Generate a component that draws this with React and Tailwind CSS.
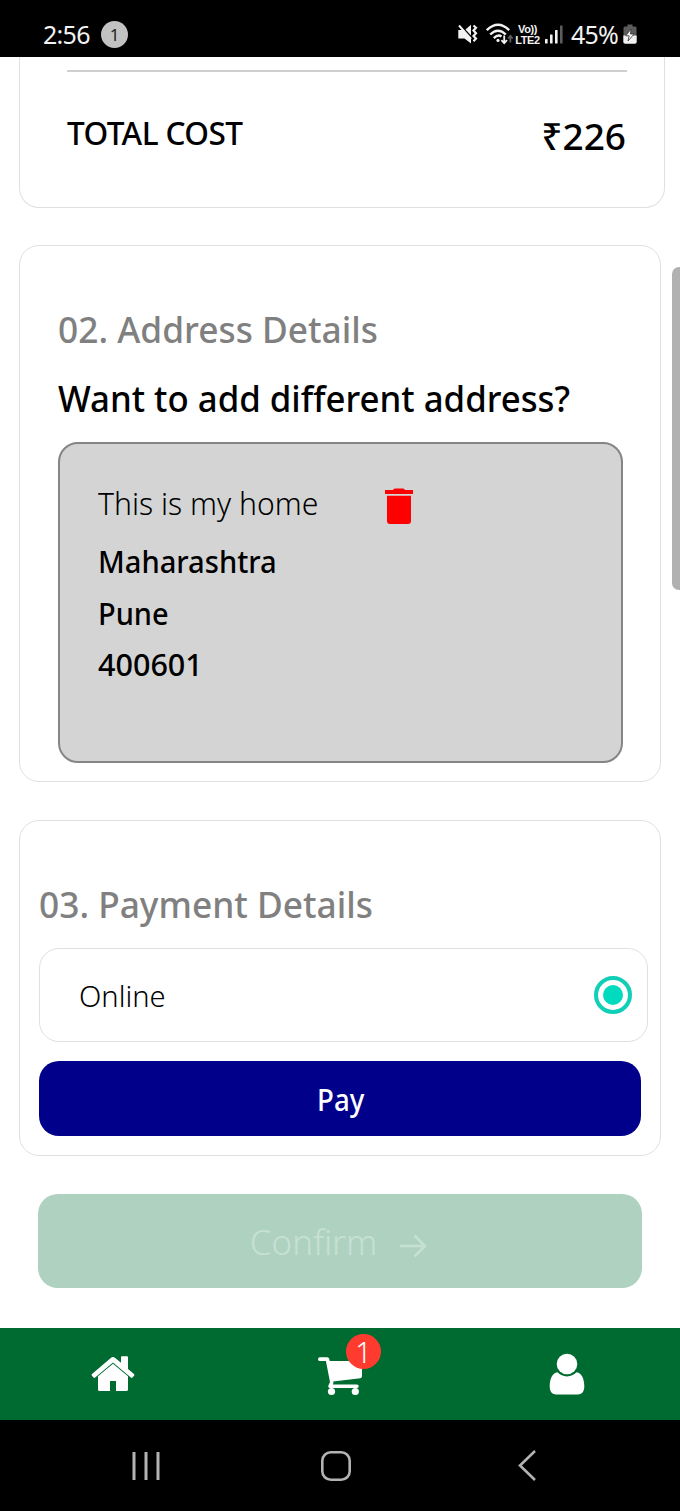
const cardClass = "rounded-[20px] border border-[#e0e0e0] bg-white";

const MuteIcon = () => (
  <svg width="20" height="20" viewBox="0 0 20 20" fill="#f2f2f2">
    <path d="M0.3 6h5L13 14.5V19.5L6.5 14.5H0.3z" />
    <path d="M7.5 5.5L13 0.8v10.7z" />
    <path d="M1 1.5l12 13.5" stroke="#f2f2f2" strokeWidth="2" />
    <path d="M15.5 1.5l2.5 2.3-2.5 2.7 2.5 2.7-2.5 2.7 2.5 2.7-2.5 2.7" fill="none" stroke="#f2f2f2" strokeWidth="2.2" />
  </svg>
);

const WifiIcon = () => (
  <svg width="27" height="22" viewBox="0 0 27 22" fill="none" stroke="#f2f2f2" strokeWidth="2.4">
    <path d="M0.8 7.2Q12 -3.8 23.2 7.2" />
    <path d="M4.2 11.5Q12 3.8 19.8 11.5" />
    <path d="M7.8 15.2Q12 11 15.5 13.5" />
    <circle cx="12" cy="17.4" r="1.6" fill="#f2f2f2" stroke="none" />
    <path d="M18.2 12.5v7.5M15.4 17.2l2.8 3 2.8-3" strokeWidth="1.8" />
    <path d="M24.4 19.5v-6M22 15.5l2.4-2.6 2.4 2.6" stroke="#5c5c5c" strokeWidth="1.8" />
  </svg>
);

const SignalIcon = () => (
  <svg width="18" height="19" viewBox="0 0 18 19" fill="#f2f2f2">
    <rect x="0" y="14" width="2.6" height="4.5" rx="0.5" />
    <rect x="5" y="9.5" width="2.6" height="9" rx="0.5" />
    <rect x="10" y="5" width="2.6" height="13.5" rx="0.5" />
    <rect x="15" y="0.5" width="2.6" height="18" rx="0.5" fill="#5c5c5c" />
  </svg>
);

const BatteryIcon = () => (
  <svg width="14" height="20" viewBox="0 0 14 20">
    <path d="M4.5 0.5h5v2h2.5a1.5 1.5 0 0 1 1.5 1.5v8.5H0.5V4a1.5 1.5 0 0 1 1.5-1.5h2.5z" fill="#5c5c5c" />
    <path d="M0.3 11.5h13.4v6.5a1.8 1.8 0 0 1-1.8 1.8H2.1a1.8 1.8 0 0 1-1.8-1.8z" fill="#f2f2f2" />
    <path d="M8 5L2.8 11.8h3.4L5 17l6-7H7.4z" fill="#fff" stroke="#333" strokeWidth="0.8" />
  </svg>
);

const TrashIcon = () => (
  <svg width="28" height="36" viewBox="0 0 28 36" fill="#ff0000">
    <path d="M0 2h7.8L9.6 0.5h8.8l1.8 1.5H28v4H0z" />
    <path d="M2 7.8h24V33a3 3 0 0 1-3 3H5a3 3 0 0 1-3-3z" />
  </svg>
);

const HomeIcon = () => (
  <svg width="44" height="36" viewBox="0 0 44 36" fill="#fff">
    <path d="M22 7.8L37 20.2V33.5a1.6 1.6 0 0 1-1.6 1.5H25V25h-6v10H8.6A1.6 1.6 0 0 1 7 33.5V20.2z" />
    <path d="M30 3V1.3A1 1 0 0 1 31 .3h5a1 1 0 0 1 1 1V13l6 5a1.2 1.2 0 0 1 .1 1.7l-1.6 1.8a1.2 1.2 0 0 1-1.7.1L22 6.4 4.2 21.6a1.2 1.2 0 0 1-1.7-.1L.9 19.7A1.2 1.2 0 0 1 1 18L19.8 1.9a3.4 3.4 0 0 1 4.4 0L30 6.8z" />
  </svg>
);

const CartIcon = () => (
  <svg width="44" height="39" viewBox="0 0 44 39" fill="#fff">
    <path d="M1.9.3H9.2Q10.8.3 11.2 1.8L11.7 4H42.2a1.8 1.8 0 0 1 1.8 1.8V19.3a1.9 1.9 0 0 1-1.7 1.9L15.2 24.4Q15.7 26 14.8 27.5H39a1.7 1.7 0 0 1 0 3.5H12a1.8 1.8 0 0 1-1.6-2.5L12 25 7.9 4H1.9a1.85 1.85 0 0 1 0-3.7z" />
    <circle cx="13.5" cy="34.5" r="3.6" />
    <circle cx="37.3" cy="34.5" r="3.6" />
  </svg>
);

const UserIcon = () => (
  <svg width="36" height="42" viewBox="0 0 36 42" fill="#fff">
    <circle cx="18" cy="11" r="10.3" />
    <path d="M8.5 19.3a13 13 0 0 0 19 0C33 20 35.3 26.5 35.3 33.5c0 5-2.5 8-6.5 8H7.2c-4 0-6.5-3-6.5-8C.7 26.5 3 20 8.5 19.3z" />
  </svg>
);

const StatusBar = () => (
  <header className="flex h-[57px] items-start justify-between bg-black px-[43px] pt-3 text-[#f2f2f2]">
    <div className="flex h-[44px] items-center gap-[10px]">
      <span className="w-[48px] text-[25px] leading-[44px] tracking-[-0.7px] whitespace-nowrap">2:56</span>
      <span className="flex size-[27px] items-center justify-center rounded-full bg-[#c2c2c2] text-[17px] leading-none text-[#222]">
        1
      </span>
    </div>
    <div className="flex h-[44px] items-center">
      <MuteIcon />
      <span className="ml-2">
        <WifiIcon />
      </span>
      <span className="ml-[1px] flex w-[27px] flex-col items-center font-['Liberation_Sans',sans-serif] text-[11px] leading-[11px] font-bold tracking-[-0.4px]">
        <span className="h-[11px]">Vo))</span>
        <span className="h-[10px]">LTE2</span>
      </span>
      <span className="ml-[4px]">
        <SignalIcon />
      </span>
      <span className="ml-[8px] w-[49px] text-[25px] leading-[44px] tracking-[-0.8px] whitespace-nowrap">45%</span>
      <span className="ml-[3px]">
        <BatteryIcon />
      </span>
    </div>
  </header>
);

const TotalCard = () => (
  <section className="ml-[19px] h-[151px] w-[646px] rounded-b-[20px] border border-t-0 border-[#e0e0e0] pt-[13px] pr-[38px] pl-[47px]">
    <div className="h-[2px] w-[560px] bg-[#cfcfcf]" />
    <div className="flex items-start justify-between pt-[41px]">
      <span className="origin-left scale-x-[0.985] text-[32px] leading-[40px] font-medium tracking-[-0.6px]">TOTAL COST</span>
      <span className="pt-[3px] text-[37px] leading-[40px] font-medium">₹226</span>
    </div>
  </section>
);

const AddressCard = () => (
  <section className={`mt-[37px] ml-[19px] h-[537px] w-[642px] pl-[38px] pt-[58px] ${cardClass}`}>
    <h2 className="origin-left scale-x-[0.967] text-[36.5px] leading-[50px] font-medium whitespace-nowrap text-[#808080]">
      02. Address Details
    </h2>
    <h3 className="mt-[19px] origin-left scale-x-[0.953] text-[36.5px] leading-[50px] font-medium whitespace-nowrap">
      Want to add different address?
    </h3>
    <div className="mt-[19px] h-[321px] w-[565px] rounded-[20px] border-2 border-[#858585] bg-[#d4d4d4] pt-[39px] pl-[38px]">
      <div className="flex h-[40px] items-center">
        <span className="w-[287px] origin-left scale-x-[0.973] text-[31px] leading-[40px] font-[350]">This is my home</span>
        <button type="button" aria-label="Delete address" className="mt-[6px]">
          <TrashIcon />
        </button>
      </div>
      <div className="mt-[13px] text-[31px] leading-[51.6px] font-medium">
        <p className="origin-left scale-x-[0.94]">Maharashtra</p>
        <p className="origin-left scale-x-[0.935]">Pune</p>
        <p className="origin-left scale-x-[0.985]">400601</p>
      </div>
    </div>
  </section>
);

const PaymentCard = () => (
  <section className={`mt-[38px] ml-[19px] h-[336px] w-[642px] pl-[19px] pt-[58px] ${cardClass}`}>
    <h2 className="origin-left scale-x-[0.967] text-[36.5px] leading-[50px] font-medium whitespace-nowrap text-[#808080]">
      03. Payment Details
    </h2>
    <div className="mt-[19px] flex h-[94px] w-[609px] items-center justify-between rounded-[20px] border border-[#e0e0e0] pr-[15px] pl-[39px]">
      <span className="origin-left scale-x-[0.97] text-[30px] font-[350]">Online</span>
      <span className="flex size-[38px] items-center justify-center rounded-full border-4 border-[#11ceb6]">
        <span className="size-[20px] rounded-full bg-[#00dbc0]" />
      </span>
    </div>
    <button
      type="button"
      className="mt-[19px] flex h-[75px] w-[602px] items-center justify-center rounded-[20px] bg-[#00008b] pt-[2px] pl-[2px] text-[30px] font-medium text-white"
    >
      <span className="scale-x-[0.92]">Pay</span>
    </button>
  </section>
);

const BottomNav = () => (
  <nav className="grid h-[92px] grid-cols-3 bg-[#006b31]">
    <div className="flex items-center justify-center">
      <HomeIcon />
    </div>
    <div className="flex items-center justify-center">
      <div className="relative mt-[4px]">
        <CartIcon />
        <span className="absolute -top-[23px] left-[28px] flex size-[35px] items-center justify-center rounded-full bg-[#ff3b30] text-[29px] leading-none font-[350] text-white">
          1
        </span>
      </div>
    </div>
    <div className="flex items-center justify-center">
      <UserIcon />
    </div>
  </nav>
);

const SystemNav = () => (
  <footer className="h-[91px] bg-black">
    <div className="ml-[51px] grid h-[91px] w-[571px] grid-cols-3 place-items-center">
      <svg width="30" height="30" viewBox="0 0 30 30" stroke="#b3b3b3" strokeWidth="3">
        <path d="M3 1v28M15 1v28M27 1v28" />
      </svg>
      <svg width="30" height="30" viewBox="0 0 30 30" fill="none" stroke="#b3b3b3" strokeWidth="2.6">
        <rect x="1.3" y="1.3" width="27.4" height="27.4" rx="8.5" />
      </svg>
      <svg width="18" height="31" viewBox="0 0 18 31" fill="none" stroke="#b3b3b3" strokeWidth="2.6">
        <path d="M17 1L2 15.5L17 30" />
      </svg>
    </div>
  </footer>
);

const App = () => (
  <div className="relative flex h-[1511px] w-[680px] flex-col overflow-hidden bg-white font-['Noto_Sans',sans-serif] text-black">
    <StatusBar />
    <main className="h-[1271px]">
      <TotalCard />
      <AddressCard />
      <PaymentCard />
      <button
        type="button"
        disabled
        className="mt-[38px] ml-[38px] flex h-[94px] w-[604px] items-center justify-center gap-[23px] rounded-[20px] bg-[#afd2c0] pt-[2px] pr-[3px] text-[35px] font-[350] text-[#c7e0d4]"
      >
        <span>Confirm</span>
        <svg width="27" height="24" viewBox="0 0 27 24" fill="none" stroke="#c7e0d4" strokeWidth="2.5" className="mt-[7px]">
          <path d="M0 12h25M14.5 1.5L25 12L14.5 22.5" />
        </svg>
      </button>
    </main>
    <BottomNav />
    <SystemNav />
    <div className="absolute top-[267px] right-0 h-[323px] w-[8px] rounded-l-[7px] bg-[#b1b1b1]" />
  </div>
);

export default App;
